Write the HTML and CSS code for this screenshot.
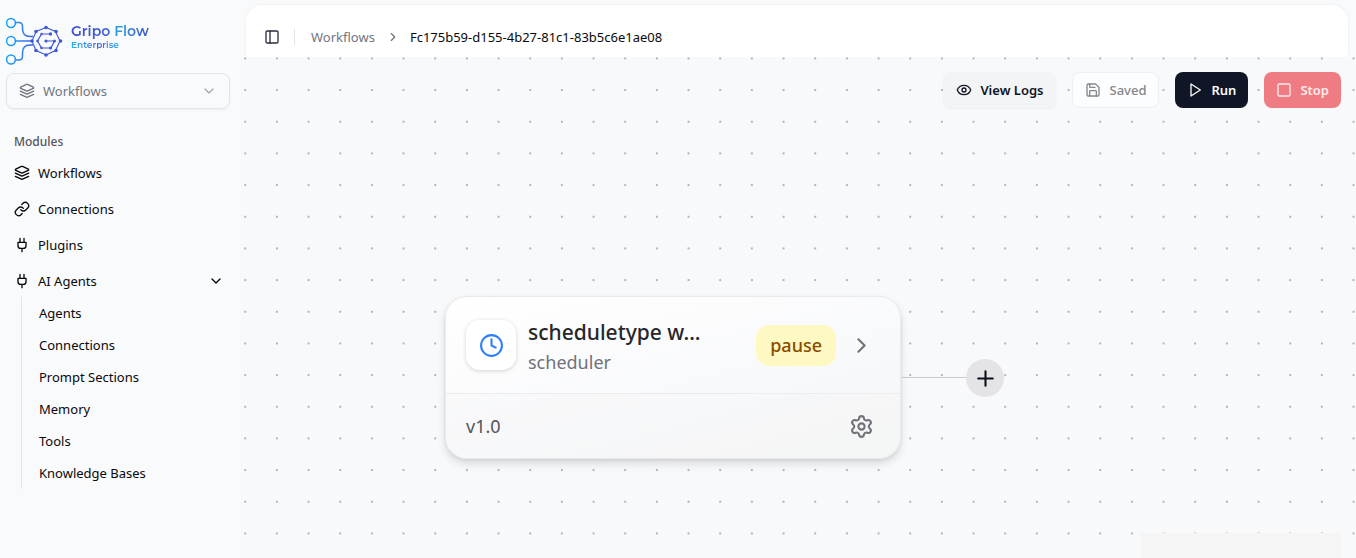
FILE: index.html
```html
<!DOCTYPE html>
<html lang="en">
<head>
<meta charset="utf-8">
<title>Gripo Flow Enterprise</title>
<link rel="stylesheet" href="styles.css">
</head>
<body>
<svg class="defs" aria-hidden="true">
  <symbol id="layers" viewBox="0 0 24 24"><path d="m12.83 2.18a2 2 0 0 0-1.66 0L2.6 6.08a1 1 0 0 0 0 1.83l8.58 3.91a2 2 0 0 0 1.66 0l8.58-3.9a1 1 0 0 0 0-1.83Z"/><path d="m22 12.18-9.17 4.16a2 2 0 0 1-1.66 0L2 12.18"/><path d="m22 17.18-9.17 4.16a2 2 0 0 1-1.66 0L2 17.18"/></symbol>
  <symbol id="link" viewBox="0 0 24 24"><path d="M10 13a5 5 0 0 0 7.54.54l3-3a5 5 0 0 0-7.07-7.07l-1.72 1.71"/><path d="M14 11a5 5 0 0 0-7.54-.54l-3 3a5 5 0 0 0 7.07 7.07l1.71-1.71"/></symbol>
  <symbol id="plug" viewBox="0 0 24 24"><path d="M12 22v-5M9 8V2M15 8V2M18 8v5a4 4 0 0 1-4 4h-4a4 4 0 0 1-4-4V8Z"/></symbol>
  <symbol id="down" viewBox="0 0 24 24"><path d="m6 9 6 6 6-6"/></symbol>
  <symbol id="right" viewBox="0 0 24 24"><path d="m9 18 6-6-6-6"/></symbol>
</svg>
<div class="app">
  <aside class="sidebar">
    <a class="brand" href="#">
      <svg class="brand-mark" viewBox="0 0 58 48" aria-hidden="true">
        <defs><linearGradient id="mark" gradientUnits="userSpaceOnUse" x1="0" y1="0" x2="58" y2="0"><stop offset="0" stop-color="#12a5fa"/><stop offset=".3" stop-color="#2f7df0"/><stop offset=".5" stop-color="#3a5be0"/><stop offset="1" stop-color="#4150cc"/></linearGradient></defs>
        <g fill="none" stroke="url(#mark)" stroke-width="1.5">
          <circle cx="5" cy="6" r="4.4"/><circle cx="5" cy="24" r="4.4"/><circle cx="5" cy="42.5" r="4.4"/>
          <path d="M9.5 5.500h3.500q3.500 0 3.500 4v2q0 8 7.500 8h3M9.500 23.900h17M9.500 43h3.500q3.500 0 3.500-4v-3q0-8 7.500-8h3"/>
          <path stroke-width="1.1" d="M40 10.500 49.500 14.500 54 24 49.500 33.500 40 38 30 33.500 26 24 30 14.500Z"/>
          <path stroke-width="1.2" d="M45 17H35.500L31.500 24 35.500 31H45L48.500 24H40"/>
        </g>
        <g fill="#3f58d4">
          <circle cx="40" cy="10.500" r="1.800"/><circle cx="50" cy="14.500" r="1.800"/><circle cx="54.500" cy="24" r="1.800"/><circle cx="50" cy="33.500" r="1.800"/><circle cx="40" cy="38" r="1.800"/><circle cx="30" cy="33.500" r="1.800"/><circle cx="26" cy="24" r="1.800"/><circle cx="30" cy="14.500" r="1.800"/>
          <circle cx="35.500" cy="17" r="1.200"/><circle cx="44.500" cy="17" r="1.700"/><circle cx="31.500" cy="24" r="1.300"/><circle cx="35.500" cy="31" r="1.300"/><circle cx="44.500" cy="31" r="1.600"/><circle cx="48.500" cy="24" r="1.500"/><circle cx="40" cy="24" r="1.600"/>
        </g>
      </svg>
      <span class="brand-text"><span class="brand-name">Gripo Flow</span><span class="brand-tier">Enterprise</span></span>
    </a>
    <div class="picker">
      <svg class="icon"><use href="#layers"/></svg>
      <select class="picker-select" aria-label="Section"><option>Workflows</option></select>
      <svg class="icon picker-arrow"><use href="#down"/></svg>
    </div>
    <nav class="nav">
      <h2 class="nav-title">Modules</h2>
      <a class="nav-item" href="#"><svg class="icon"><use href="#layers"/></svg>Workflows</a>
      <a class="nav-item" href="#"><svg class="icon"><use href="#link"/></svg>Connections</a>
      <a class="nav-item" href="#"><svg class="icon"><use href="#plug"/></svg>Plugins</a>
      <button class="nav-item" aria-expanded="true"><svg class="icon"><use href="#plug"/></svg>AI Agents<svg class="icon nav-arrow"><use href="#down"/></svg></button>
      <div class="subnav">
        <a class="sub-item" href="#">Agents</a>
        <a class="sub-item" href="#">Connections</a>
        <a class="sub-item" href="#">Prompt Sections</a>
        <a class="sub-item" href="#">Memory</a>
        <a class="sub-item" href="#">Tools</a>
        <a class="sub-item" href="#">Knowledge Bases</a>
      </div>
    </nav>
  </aside>
  <main class="main">
    <header class="topbar">
      <button class="toggle" aria-label="Toggle sidebar"><svg class="icon" viewBox="0 0 24 24"><rect x="3" y="3" width="18" height="18" rx="2"/><path d="M9 3v18"/></svg></button>
      <span class="rule"></span>
      <a class="crumb" href="#">Workflows</a>
      <svg class="icon crumb-arrow"><use href="#right"/></svg>
      <span class="crumb-current">Fc175b59-d155-4b27-81c1-83b5c6e1ae08</span>
    </header>
    <section class="canvas">
      <svg class="dots" aria-hidden="true">
        <defs><pattern id="grid" width="20" height="20" patternUnits="userSpaceOnUse" patternTransform="translate(-10.6 -14.4) scale(1.5833)"><circle cx="10" cy="10" r=".55" fill="#91919a"/></pattern></defs>
        <rect width="100%" height="100%" fill="url(#grid)"/>
      </svg>
      <div class="actions">
        <button class="btn btn-logs"><svg class="icon" viewBox="0 0 24 24"><path d="M2.062 12.348a1 1 0 0 1 0-.696 10.750 10.750 0 0 1 19.876 0 1 1 0 0 1 0 .696 10.750 10.750 0 0 1-19.876 0"/><circle cx="12" cy="12" r="3"/></svg>View Logs</button>
        <button class="btn btn-saved"><svg class="icon" viewBox="0 0 24 24"><path d="M15.200 3a2 2 0 0 1 1.400.6l3.800 3.800a2 2 0 0 1 .6 1.400V19a2 2 0 0 1-2 2H5a2 2 0 0 1-2-2V5a2 2 0 0 1 2-2z"/><path d="M17 21v-7a1 1 0 0 0-1-1H8a1 1 0 0 0-1 1v7M7 3v4a1 1 0 0 0 1 1h7"/></svg>Saved</button>
        <button class="btn btn-run"><svg class="icon" viewBox="0 0 24 24"><path d="m6 3 14 9-14 9z"/></svg>Run</button>
        <button class="btn btn-stop"><svg class="icon" viewBox="0 0 24 24"><rect x="3" y="3" width="18" height="18" rx="2"/></svg>Stop</button>
      </div>
      <span class="edge"></span>
      <button class="add" aria-label="Add step"><svg class="icon" viewBox="0 0 24 24"><path d="M5 12h14M12 5v14"/></svg></button>
      <article class="node">
        <div class="node-head">
          <span class="node-icon"><svg class="icon" viewBox="0 0 24 24"><circle cx="12" cy="12" r="10"/><path d="M12 6v6l4 2"/></svg></span>
          <div class="node-text"><h3 class="node-title">scheduletype w...</h3><p class="node-kind">scheduler</p></div>
          <span class="badge">pause</span>
          <button class="node-btn" aria-label="Open"><svg class="icon"><use href="#right"/></svg></button>
        </div>
        <div class="node-foot">
          <span>v1.0</span>
          <button class="node-btn" aria-label="Settings"><svg class="icon" viewBox="0 0 24 24"><path d="M9.671 4.136a2.340 2.340 0 0 1 4.659 0 2.340 2.340 0 0 0 3.319 1.915 2.340 2.340 0 0 1 2.330 4.033 2.340 2.340 0 0 0 0 3.831 2.340 2.340 0 0 1-2.330 4.033 2.340 2.340 0 0 0-3.319 1.915 2.340 2.340 0 0 1-4.659 0 2.340 2.340 0 0 0-3.320-1.915 2.340 2.340 0 0 1-2.330-4.033 2.340 2.340 0 0 0 0-3.831A2.340 2.340 0 0 1 6.350 6.051a2.340 2.340 0 0 0 3.319-1.915"/><circle cx="12" cy="12" r="3"/></svg></button>
        </div>
      </article>
      <div class="minimap"></div>
    </section>
  </main>
</div>
</body>
</html>
```
FILE: styles.css
```css
* { box-sizing: border-box; }
body {
  margin: 0;
  background: #f9fafc;
  color: #09090b;
  font: 13px/20px "Segoe UI", "Noto Sans", sans-serif;
}
a { color: inherit; text-decoration: none; }
button { border: 0; background: none; padding: 0; font: inherit; color: inherit; }
h2, h3, p { margin: 0; }
.defs { position: absolute; width: 0; height: 0; }
.icon {
  width: 16px;
  height: 16px;
  flex: none;
  fill: none;
  stroke: currentColor;
  stroke-width: 2;
  stroke-linecap: round;
  stroke-linejoin: round;
}
.app { display: grid; grid-template-columns: 240px 1fr; min-height: 100vh; }

.sidebar { padding: 17px 10px 16px 6px; }
.brand { display: flex; align-items: flex-start; gap: 7px; height: 48px; }
.brand-mark { width: 58px; height: 48px; }
.brand-text { display: flex; flex-direction: column; padding-top: 5px; font-family: Montserrat, Inter, sans-serif; }
.brand-name, .brand-tier { background-clip: text; color: transparent; }
.brand-name {
  font-size: 14px;
  font-weight: 600;
  line-height: 18px;
  background-image: linear-gradient(90deg, #3b4bd8, #3f5fd0 45%, #2fa0d8 60%, #4050c8);
}
.brand-tier {
  align-self: flex-start;
  font-size: 9px;
  font-weight: 600;
  line-height: 9px;
  background-image: linear-gradient(90deg, #1cb4f8, #4a66e0 60%, #20a8f4);
}
.picker {
  position: relative;
  display: flex;
  align-items: center;
  height: 36px;
  margin-top: 8px;
  padding: 0 12px;
  border: 1px solid #e4e5e9;
  border-radius: 8px;
  box-shadow: 0 1px 2px rgba(0, 0, 0, .05);
  color: #71757f;
}
.picker-select {
  flex: 1;
  appearance: none;
  border: 0;
  background: none;
  padding: 0 8px;
  font: inherit;
  color: inherit;
}
.picker-arrow { opacity: .6; }
.nav { margin-top: 17px; }
.nav-title { padding: 0 8px; font-size: 12px; font-weight: 500; line-height: 31px; color: #55565c; }
.nav-item {
  display: flex;
  align-items: center;
  gap: 8px;
  width: 100%;
  height: 32px;
  padding: 0 8px;
}
.nav-item + .nav-item { margin-top: 4px; }
.nav-arrow { margin-left: auto; margin-right: -2px; }
.subnav {
  display: flex;
  flex-direction: column;
  gap: 4px;
  margin-left: 15px;
  padding: 2px 0;
  border-left: 1px solid #e4e4e7;
}
.sub-item { padding: 0 17px; line-height: 28px; }

.main { display: flex; flex-direction: column; min-width: 0; }
.topbar {
  display: flex;
  align-items: center;
  height: 52px;
  margin: 5px 8px 0 6px;
  padding: 12px 18px 0;
  background: #fff;
  border-radius: 16px 16px 0 0;
  box-shadow: 0 0 3px rgba(0, 0, 0, .08);
}
.toggle { display: flex; color: #2b2d3b; }
.rule { width: 1px; height: 16px; margin: 0 16px 0 14px; background: #e4e4e7; }
.crumb { color: #71757f; }
.crumb-arrow { width: 14px; height: 14px; margin: 0 10px 0 11px; color: #71717a; }
.canvas { position: relative; flex: 1; background: #f8f9fb; }
.dots { position: absolute; inset: 0; width: 100%; height: 100%; }
.actions { position: relative; display: flex; justify-content: flex-end; gap: 16px; padding: 15px 15px 0; }
.btn {
  display: flex;
  align-items: center;
  gap: 8px;
  height: 36px;
  padding: 0 13px;
  border-radius: 8px;
  font-weight: 600;
}
.btn-logs { background: #f3f4f5; color: #0f1524; box-shadow: 0 1px 2px rgba(0, 0, 0, .05); }
.btn-saved { padding: 0 12px; background: #fcfdfe; border: 1px solid #eeeff2; color: #85868b; font-weight: 500; }
.btn-run { padding: 0 12px; background: #101625; color: #fafafa; }
.btn-stop { padding: 0 12px; background: #f07c83; color: #fdeced; }

.node {
  position: absolute;
  left: 205px;
  top: 239px;
  width: 456px;
  border: 1px solid #e9eaec;
  border-radius: 22px;
  background: linear-gradient(165deg, #fff, #f8f9fb 60%, #f4f5f5);
  box-shadow: 0 5px 9px rgba(0, 0, 0, .12), 0 1px 3px rgba(0, 0, 0, .08);
  overflow: hidden;
}
.node-head { display: flex; align-items: center; height: 96px; padding: 0 26px 0 20px; }
.node-icon {
  display: grid;
  place-items: center;
  width: 50px;
  height: 50px;
  border-radius: 14px;
  background: #fff;
  box-shadow: 0 1px 4px rgba(0, 0, 0, .16);
  color: #2b7fff;
}
.node-icon .icon { width: 25px; height: 25px; }
.node-text { flex: 1; min-width: 0; margin: 0 12px; padding-top: 4px; }
.node-title {
  white-space: nowrap;
  font-size: 21px;
  font-weight: 500;
  line-height: 30px;
  color: #27272a;
}
.node-kind { font-size: 18px; line-height: 30px; color: #71717a; }
.badge { padding: 0 14px; border-radius: 13px; background: #fef9c2; color: #894b00; font-size: 18px; font-weight: 500; line-height: 41px; }
.node-btn { display: flex; color: #71717a; }
.node-btn .icon { width: 25px; height: 25px; }
.badge + .node-btn { margin-left: 13px; }
.node-foot {
  display: flex;
  align-items: center;
  justify-content: space-between;
  height: 65px;
  padding: 0 26px 0 20px;
  border-top: 1px solid #ececee;
  background: rgba(244, 244, 245, .3);
  font-size: 18px;
  color: #52525c;
}
.edge { position: absolute; left: 662px; top: 320px; width: 66px; height: 1px; background: #c9cacd; }
.add {
  position: absolute;
  left: 726px;
  top: 302px;
  display: grid;
  place-items: center;
  width: 38px;
  height: 38px;
  border-radius: 50%;
  background: #e4e4e7;
  color: #0b0e1a;
}
.add .icon { width: 25px; height: 25px; }
.minimap { position: absolute; right: 15px; bottom: 0; width: 200px; height: 25px; background: #f5f5f5; }
```
